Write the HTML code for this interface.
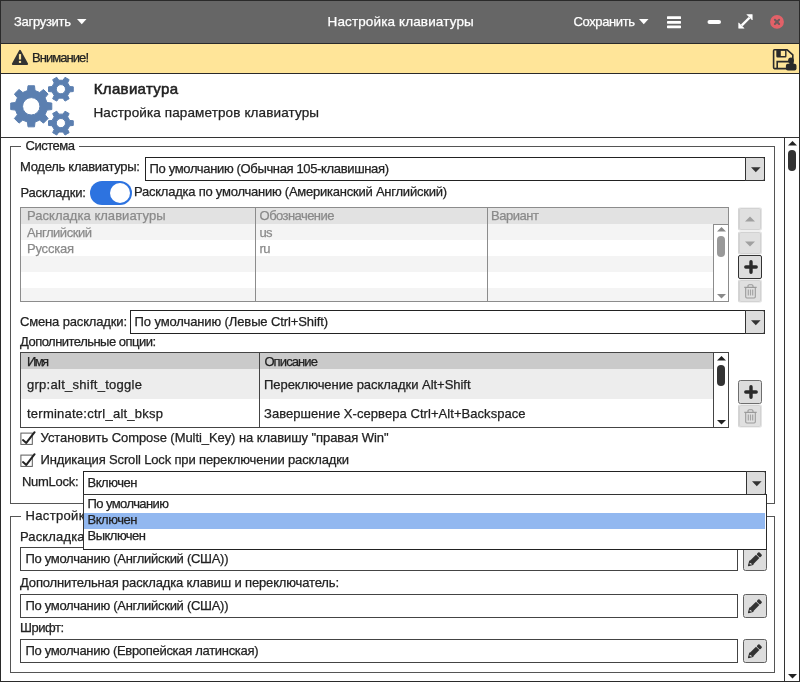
<!DOCTYPE html>
<html><head><meta charset="utf-8">
<style>
html,body{margin:0;padding:0;}
body{width:800px;height:682px;position:relative;overflow:hidden;background:#fff;font-family:"Liberation Sans",sans-serif;}
.a{position:absolute;box-sizing:border-box;}
.t{position:absolute;white-space:nowrap;line-height:20px;height:20px;-webkit-text-stroke:0.25px currentColor;}
.combo{position:absolute;box-sizing:border-box;border:1px solid #222;background:#fff;}
.cbtn{position:absolute;box-sizing:border-box;right:-1px;top:-1px;bottom:-1px;width:20px;border:1px solid #333;background:#dcdcdc;border-radius:0 2px 2px 0;}
.field{position:absolute;box-sizing:border-box;border:1px solid #444;background:#fff;}
.btn{position:absolute;box-sizing:border-box;width:24px;height:24px;border:1px solid #606060;border-radius:2.5px;background:#dddddd;}
.btn.dis{border-color:#f0f0f0 #e4e4e4 #f0f0f0 #d4d4d4;background:#e0e0e0;border-radius:3px;box-shadow:inset 0 0 0 1px #d2d2d2;}
.btn.en{border-color:#333;border-radius:2px;}
svg{position:absolute;overflow:visible;}
.tl{position:absolute;left:0;top:0;width:800px;height:682px;will-change:transform;}
</style></head><body>
<!-- title bar -->
<div class="a" style="left:0;top:0;width:800px;height:44px;background:#666;border-top:1px solid #3a3a3a;border-bottom:1px solid #2a2a2a;"></div>
<!-- warning bar -->
<div class="a" style="left:0;top:44px;width:800px;height:30px;background:#ffe599;border-bottom:1px solid #2a2a2a;"></div>
<!-- header separator -->
<div class="a" style="left:0;top:137px;width:800px;height:1px;background:#333;"></div>
<!-- scroll pane right line -->
<div class="a" style="left:784px;top:138px;width:1px;height:544px;background:#333;"></div>

<!-- fieldset 1 -->
<div class="a" style="left:10px;top:146px;width:765px;height:358px;border:1px solid #555;"></div>
<div class="a" style="left:21px;top:140px;width:58px;height:14px;background:#fff;"></div>
<!-- fieldset 2 -->
<div class="a" style="left:10px;top:516px;width:765px;height:157px;border:1px solid #555;"></div>
<div class="a" style="left:21px;top:510px;width:76px;height:14px;background:#fff;"></div>

<!-- combo 1 -->
<div class="combo" style="left:145px;top:157px;width:620px;height:24px;"><div class="cbtn"><svg style="left:5px;top:9px" width="10" height="6"><path d="M0,0.3 L9.6,0.3 L4.8,5.3Z" fill="#333"/></svg></div></div>
<!-- toggle -->
<div class="a" style="left:90px;top:181px;width:42px;height:23.7px;border-radius:12px;background:#2d73e0;"></div>
<div class="a" style="left:110px;top:182.9px;width:20.2px;height:20px;border-radius:10.1px;background:#fff;"></div>

<!-- table 1 -->
<div class="a" style="left:20px;top:207px;width:709px;height:95px;border:1px solid #8c8c8c;background:#fff;overflow:hidden;">
  <div class="a" style="left:0;top:0;width:707px;height:16px;background:#e2e2e2;"></div>
  <div class="a" style="left:0;top:16px;width:693px;height:16px;background:#f4f4f4;"></div>
  <div class="a" style="left:0;top:48px;width:693px;height:16px;background:#f4f4f4;"></div>
  <div class="a" style="left:0;top:80px;width:693px;height:16px;background:#f4f4f4;"></div>
  <div class="a" style="left:234px;top:0;width:1px;height:95px;background:#8c8c8c;"></div>
  <div class="a" style="left:466px;top:0;width:1px;height:95px;background:#8c8c8c;"></div>
  <div class="a" style="left:692px;top:16px;width:16px;height:80px;background:#fff;border-left:1px solid #8c8c8c;border-top:1px solid #8c8c8c;"></div>
  <div class="a" style="left:696.4px;top:28px;width:7.5px;height:21px;border-radius:4px;background:#999;"></div>
  <svg style="left:696px;top:19px" width="9" height="5"><path d="M0,4.5 L4.5,0 L9,4.5Z" fill="#8a8a8a"/></svg>
  <svg style="left:696px;top:86px" width="9" height="5"><path d="M0,0 L9,0 L4.5,4.5Z" fill="#8a8a8a"/></svg>
</div>
<!-- buttons next to table 1 -->
<div class="btn dis" style="left:738px;top:207px;"><svg style="left:6px;top:8px" width="10" height="6"><path d="M0,5.5 L5,0.5 L10,5.5Z" fill="#a0a0a0"/></svg></div>
<div class="btn dis" style="left:738px;top:231px;"><svg style="left:6px;top:9px" width="10" height="6"><path d="M0,0.5 L10,0.5 L5,5.5Z" fill="#a0a0a0"/></svg></div>
<div class="btn en" style="left:738px;top:255px;"><svg style="left:4.5px;top:4px" width="14" height="14" viewBox="0 0 14 14"><path d="M7,1.8 V12.2 M1.8,7 H12.2" stroke="#2a2a2a" stroke-width="3.4" stroke-linecap="round" fill="none"/></svg></div>
<div class="btn dis" style="left:738px;top:279px;"><svg style="left:4.5px;top:3.6px" width="13" height="15" viewBox="0 0 13 15"><path d="M0.3,3.4 h12.4 M4,3.2 v-1.2 q0,-1.2 1.2,-1.2 h2.6 q1.2,0 1.2,1.2 v1.2 M1.7,3.6 v9.2 q0,1.2 1.2,1.2 h7.2 q1.2,0 1.2,-1.2 v-9.2" fill="none" stroke="#9a9a9a" stroke-width="1.1"/><path d="M4.3,5.6 v6 M6.5,5.6 v6 M8.7,5.6 v6" fill="none" stroke="#a4a4a4" stroke-width="1.2"/></svg></div>

<!-- combo 2 -->
<div class="combo" style="left:130px;top:310px;width:635px;height:24px;"><div class="cbtn"><svg style="left:5px;top:9px" width="10" height="6"><path d="M0,0.3 L9.6,0.3 L4.8,5.3Z" fill="#333"/></svg></div></div>

<!-- table 2 -->
<div class="a" style="left:20px;top:352px;width:709px;height:76px;border:1px solid #444;background:#fff;overflow:hidden;">
  <div class="a" style="left:0;top:0;width:707px;height:16px;background:#cacaca;"></div>
  <div class="a" style="left:0;top:16px;width:693px;height:30px;background:#ededed;"></div>
  <div class="a" style="left:238px;top:0;width:1px;height:76px;background:#444;"></div>
  <div class="a" style="left:692px;top:0px;width:16px;height:76px;background:#fff;border-left:1px solid #444;"></div>
  <div class="a" style="left:696.4px;top:12px;width:7.6px;height:21px;border-radius:4px;background:#333;"></div>
  <svg style="left:696px;top:3px" width="9" height="5"><path d="M0,4.5 L4.5,0 L9,4.5Z" fill="#222"/></svg>
  <svg style="left:696px;top:67px" width="9" height="5"><path d="M0,0 L9,0 L4.5,4.5Z" fill="#222"/></svg>
</div>
<div class="btn" style="left:738px;top:380px;border-color:#6e6e6e;"><svg style="left:4.5px;top:4px" width="14" height="14" viewBox="0 0 14 14"><path d="M7,1.8 V12.2 M1.8,7 H12.2" stroke="#2a2a2a" stroke-width="3.4" stroke-linecap="round" fill="none"/></svg></div>
<div class="btn dis" style="left:738px;top:404px;"><svg style="left:4.5px;top:3.6px" width="13" height="15" viewBox="0 0 13 15"><path d="M0.3,3.4 h12.4 M4,3.2 v-1.2 q0,-1.2 1.2,-1.2 h2.6 q1.2,0 1.2,1.2 v1.2 M1.7,3.6 v9.2 q0,1.2 1.2,1.2 h7.2 q1.2,0 1.2,-1.2 v-9.2" fill="none" stroke="#9a9a9a" stroke-width="1.1"/><path d="M4.3,5.6 v6 M6.5,5.6 v6 M8.7,5.6 v6" fill="none" stroke="#a4a4a4" stroke-width="1.2"/></svg></div>

<!-- checkboxes -->
<svg style="left:0;top:428px" width="40" height="20"><rect x="20.9" y="5.1" width="11.4" height="11.3" fill="#fff" stroke="#5a5a5a" stroke-width="1"/><path d="M23,12.1 L26.3,14.9 L34.6,4.2" fill="none" stroke="#222" stroke-width="2" stroke-linejoin="round" stroke-linecap="round"/></svg>
<svg style="left:0;top:450px" width="40" height="20"><rect x="20.9" y="5.1" width="11.4" height="11.3" fill="#fff" stroke="#5a5a5a" stroke-width="1"/><path d="M23,12.1 L26.3,14.9 L34.6,4.2" fill="none" stroke="#222" stroke-width="2" stroke-linejoin="round" stroke-linecap="round"/></svg>

<!-- combo 3 -->
<div class="combo" style="left:83px;top:471px;width:683px;height:24px;"><div class="cbtn"><svg style="left:5px;top:9px" width="10" height="6"><path d="M0,0.3 L9.6,0.3 L4.8,5.3Z" fill="#333"/></svg></div></div>

<!-- fields -->
<div class="field" style="left:20px;top:547px;width:718px;height:24px;"></div>
<div class="btn pb" style="left:743px;top:547px;"><svg style="left:0px;top:0px" width="22" height="22" viewBox="0 0 22 22"><g transform="translate(4.5,17.6) rotate(-45)"><path d="M0,0 L4,-2.3 L4,2.3Z" fill="#cfcfcf" stroke="#333" stroke-width="1.1" stroke-linejoin="round"/><path d="M0,0 L1.6,-1 L1.6,1Z" fill="#333"/><rect x="4" y="-2.4" width="9" height="4.8" fill="#333"/><rect x="13.7" y="-2.4" width="3.4" height="4.8" rx="1" fill="#333"/></g></svg></div>
<div class="field" style="left:20px;top:594px;width:718px;height:24px;"></div>
<div class="btn pb" style="left:743px;top:594px;"><svg style="left:0px;top:0px" width="22" height="22" viewBox="0 0 22 22"><g transform="translate(4.5,17.6) rotate(-45)"><path d="M0,0 L4,-2.3 L4,2.3Z" fill="#cfcfcf" stroke="#333" stroke-width="1.1" stroke-linejoin="round"/><path d="M0,0 L1.6,-1 L1.6,1Z" fill="#333"/><rect x="4" y="-2.4" width="9" height="4.8" fill="#333"/><rect x="13.7" y="-2.4" width="3.4" height="4.8" rx="1" fill="#333"/></g></svg></div>
<div class="field" style="left:20px;top:639px;width:718px;height:24px;"></div>
<div class="btn pb" style="left:743px;top:639px;"><svg style="left:0px;top:0px" width="22" height="22" viewBox="0 0 22 22"><g transform="translate(4.5,17.6) rotate(-45)"><path d="M0,0 L4,-2.3 L4,2.3Z" fill="#cfcfcf" stroke="#333" stroke-width="1.1" stroke-linejoin="round"/><path d="M0,0 L1.6,-1 L1.6,1Z" fill="#333"/><rect x="4" y="-2.4" width="9" height="4.8" fill="#333"/><rect x="13.7" y="-2.4" width="3.4" height="4.8" rx="1" fill="#333"/></g></svg></div>

<!--GEARS_S--><svg style="left:0;top:0" width="100" height="140"><path d="M35.03,122.05 L34.50,126.84 L28.00,126.84 L27.47,122.05 L22.79,120.11 L19.02,123.13 L14.42,118.53 L17.44,114.76 L15.50,110.08 L10.71,109.55 L10.71,103.05 L15.50,102.52 L17.44,97.84 L14.42,94.07 L19.02,89.47 L22.79,92.49 L27.47,90.55 L28.00,85.76 L34.50,85.76 L35.03,90.55 L39.71,92.49 L43.48,89.47 L48.08,94.07 L45.06,97.84 L47.00,102.52 L51.79,103.05 L51.79,109.55 L47.00,110.08 L45.06,114.76 L48.08,118.53 L43.48,123.13 L39.71,120.11Z M39.95,106.30 A8.7,8.7 0 1 0 22.55,106.30 A8.7,8.7 0 1 0 39.95,106.30Z M69.71,86.54 L73.28,86.84 L73.28,91.56 L69.71,91.86 L67.61,95.50 L69.13,98.74 L65.04,101.10 L63.00,98.16 L58.80,98.16 L56.76,101.10 L52.67,98.74 L54.19,95.50 L52.09,91.86 L48.52,91.56 L48.52,86.84 L52.09,86.54 L54.19,82.90 L52.67,79.66 L56.76,77.30 L58.80,80.24 L63.00,80.24 L65.04,77.30 L69.13,79.66 L67.61,82.90Z M65.50,89.20 A4.6,4.6 0 1 0 56.30,89.20 A4.6,4.6 0 1 0 65.50,89.20Z M69.71,120.44 L73.28,120.74 L73.28,125.46 L69.71,125.76 L67.61,129.40 L69.13,132.64 L65.04,135.00 L63.00,132.06 L58.80,132.06 L56.76,135.00 L52.67,132.64 L54.19,129.40 L52.09,125.76 L48.52,125.46 L48.52,120.74 L52.09,120.44 L54.19,116.80 L52.67,113.56 L56.76,111.20 L58.80,114.14 L63.00,114.14 L65.04,111.20 L69.13,113.56 L67.61,116.80Z M65.50,123.10 A4.6,4.6 0 1 0 56.30,123.10 A4.6,4.6 0 1 0 65.50,123.10Z" fill="#5b7fb0" fill-rule="evenodd" stroke="#5b7fb0" stroke-width="1" stroke-linejoin="round"/></svg><!--GEARS_E-->
<!--ICONS_S-->
<!-- title arrows -->
<svg style="left:77px;top:19px" width="10" height="6"><path d="M0,0 L9.5,0 L4.75,5.2Z" fill="#fff"/></svg>
<svg style="left:639px;top:19px" width="10" height="6"><path d="M0,0 L9.5,0 L4.75,5.2Z" fill="#fff"/></svg>
<!-- hamburger -->
<svg style="left:660px;top:10px" width="30" height="24"><rect x="7" y="6.2" width="14" height="2.8" rx=".6" fill="#fff"/><rect x="7" y="10.9" width="14" height="2.8" rx=".6" fill="#fff"/><rect x="7" y="15.4" width="14" height="2.8" rx=".6" fill="#fff"/></svg>
<!-- minimize -->
<svg style="left:700px;top:10px" width="30" height="24"><rect x="7.5" y="9.9" width="13.5" height="4.1" rx="2" fill="#fff"/></svg>
<!-- expand -->
<svg style="left:738.4px;top:14.4px" width="15" height="15" viewBox="0 0 16 16"><path d="M4,12.2 L12.2,4" stroke="#fff" stroke-width="2.6" fill="none"/><path d="M9.4,0.6 L15.2,0.6 L15.2,6.4Z M0.7,9.4 L0.7,15.2 L6.5,15.2Z" fill="#fff" stroke="#fff" stroke-width="0.6" stroke-linejoin="round"/></svg>
<!-- close -->
<svg style="left:769px;top:14px" width="16" height="16" viewBox="0 0 16 16"><circle cx="8" cy="7.9" r="6.9" fill="#e26168"/><path d="M5.9,5.8 L10.1,10 M10.1,5.8 L5.9,10" stroke="#6b5a5c" stroke-width="2" stroke-linecap="round" fill="none"/></svg>
<!-- warning -->
<svg style="left:11px;top:49px" width="18" height="17" viewBox="0 0 18 17"><path d="M9,1.8 L16.2,15 L1.8,15Z" fill="#333" stroke="#333" stroke-width="1.8" stroke-linejoin="round"/><rect x="7.9" y="5.1" width="2.2" height="5.4" fill="#ffe599"/><rect x="7.9" y="11.9" width="2.2" height="2" fill="#ffe599"/></svg>
<!-- save -->
<svg style="left:772px;top:48px" width="26" height="24" viewBox="0 0 26 24"><path d="M2.5,1.8 H15.2 L20.8,6.8 V20.6 H2.5 Q1.6,20.6 1.6,19.6 V2.8 Q1.6,1.8 2.5,1.8Z" fill="none" stroke="#2a2a2a" stroke-width="1.6" stroke-linejoin="round"/><rect x="5" y="2" width="8.8" height="6.8" fill="none" stroke="#2a2a2a" stroke-width="1.4" rx="0.5"/><rect x="5" y="2" width="3.8" height="6.8" fill="#2a2a2a"/><path d="M5.2,20.6 V13.6 H20.8" fill="none" stroke="#2a2a2a" stroke-width="1.6"/><circle cx="19" cy="12.4" r="2.9" fill="#2a2a2a"/><rect x="13.9" y="15.8" width="10.6" height="6.8" rx="2" fill="#2a2a2a"/><path d="M17.4,15 h3.2 v2 h-3.2z" fill="#2a2a2a"/></svg>
<!--ICONS_E-->
<div class="tl"><div class="t" style="left:14.00px;top:12px;font-size:13px;color:#fff;letter-spacing:-0.295px;">Загрузить</div>
<div class="t" style="left:327.50px;top:12px;font-size:13.5px;color:#fff;letter-spacing:0.132px;">Настройка клавиатуры</div>
<div class="t" style="left:573.50px;top:12px;font-size:13px;color:#fff;letter-spacing:-0.389px;">Сохранить</div>
<div class="t" style="left:32.00px;top:48px;font-size:13px;color:#222;letter-spacing:-0.945px;">Внимание!</div>
<div class="t" style="left:93.80px;top:79px;font-size:15px;color:#222;letter-spacing:0.328px;-webkit-text-stroke:0.55px #222;">Клавиатура</div>
<div class="t" style="left:93.40px;top:103px;font-size:13.5px;color:#222;letter-spacing:0.119px;">Настройка параметров клавиатуры</div>
<div class="t" style="left:25.50px;top:136px;font-size:13px;color:#222;letter-spacing:-0.477px;">Система</div>
<div class="t" style="left:20.00px;top:157px;font-size:13px;color:#222;letter-spacing:-0.276px;">Модель клавиатуры:</div>
<div class="t" style="left:149.60px;top:159px;font-size:13px;color:#222;letter-spacing:-0.350px;">По умолчанию (Обычная 105-клавишная)</div>
<div class="t" style="left:20.40px;top:183px;font-size:13px;color:#222;letter-spacing:-0.130px;">Раскладки:</div>
<div class="t" style="left:134.00px;top:182px;font-size:13px;color:#222;letter-spacing:-0.235px;">Раскладка по умолчанию (Американский Английский)</div>
<div class="t" style="left:27.00px;top:206px;font-size:13px;color:#8a8a8a;letter-spacing:0.036px;">Раскладка клавиатуры</div>
<div class="t" style="left:259.60px;top:206px;font-size:13px;color:#8a8a8a;letter-spacing:-0.561px;">Обозначение</div>
<div class="t" style="left:491.00px;top:206px;font-size:13px;color:#8a8a8a;letter-spacing:-0.461px;">Вариант</div>
<div class="t" style="left:27.00px;top:223px;font-size:13px;color:#8a8a8a;letter-spacing:-0.460px;">Английский</div>
<div class="t" style="left:259.60px;top:223px;font-size:13px;color:#8a8a8a;letter-spacing:-0.734px;">us</div>
<div class="t" style="left:27.00px;top:239px;font-size:13px;color:#8a8a8a;letter-spacing:-0.214px;">Русская</div>
<div class="t" style="left:259.60px;top:239px;font-size:13px;color:#8a8a8a;letter-spacing:-0.562px;">ru</div>
<div class="t" style="left:20.00px;top:312px;font-size:13px;color:#222;letter-spacing:-0.156px;">Смена раскладки:</div>
<div class="t" style="left:134.60px;top:312px;font-size:13px;color:#222;letter-spacing:-0.116px;">По умолчанию (Левые Ctrl+Shift)</div>
<div class="t" style="left:20.00px;top:332px;font-size:13px;color:#222;letter-spacing:-0.519px;">Дополнительные опции:</div>
<div class="t" style="left:27.00px;top:352px;font-size:13px;color:#222;letter-spacing:-1.664px;">Имя</div>
<div class="t" style="left:264.40px;top:352px;font-size:13px;color:#222;letter-spacing:-0.890px;">Описание</div>
<div class="t" style="left:27.00px;top:375px;font-size:13px;color:#222;letter-spacing:0.271px;">grp:alt_shift_toggle</div>
<div class="t" style="left:264.00px;top:375px;font-size:13px;color:#222;letter-spacing:-0.040px;">Переключение раскладки Alt+Shift</div>
<div class="t" style="left:27.00px;top:404px;font-size:13px;color:#222;letter-spacing:0.237px;">terminate:ctrl_alt_bksp</div>
<div class="t" style="left:264.00px;top:404px;font-size:13px;color:#222;letter-spacing:0.057px;">Завершение X-сервера Ctrl+Alt+Backspace</div>
<div class="t" style="left:40.60px;top:428px;font-size:13px;color:#222;letter-spacing:-0.069px;">Установить Compose (Multi_Key) на клавишу &quot;правая Win&quot;</div>
<div class="t" style="left:40.60px;top:450px;font-size:13px;color:#222;letter-spacing:-0.148px;">Индикация Scroll Lock при переключении раскладки</div>
<div class="t" style="left:22.00px;top:472px;font-size:13px;color:#222;letter-spacing:-0.276px;">NumLock:</div>
<div class="t" style="left:87.50px;top:473px;font-size:13px;color:#222;letter-spacing:-0.458px;">Включен</div>
<div class="t" style="left:25.50px;top:506px;font-size:13px;color:#222;letter-spacing:0.344px;">Настройки</div>
<div class="t" style="left:20.00px;top:527px;font-size:13px;color:#222;letter-spacing:0.135px;">Раскладка</div>
<div class="t" style="left:25.40px;top:549px;font-size:13px;color:#222;letter-spacing:-0.282px;">По умолчанию (Английский (США))</div>
<div class="t" style="left:20.00px;top:573px;font-size:13px;color:#222;letter-spacing:-0.146px;">Дополнительная раскладка клавиш и переключатель:</div>
<div class="t" style="left:25.40px;top:596px;font-size:13px;color:#222;letter-spacing:-0.282px;">По умолчанию (Английский (США))</div>
<div class="t" style="left:20.00px;top:618px;font-size:13px;color:#222;letter-spacing:-0.478px;">Шрифт:</div>
<div class="t" style="left:25.40px;top:641px;font-size:13px;color:#222;letter-spacing:-0.305px;">По умолчанию (Европейская латинская)</div></div>

<!-- dropdown popup -->
<div class="a" style="left:83px;top:494px;width:683.8px;height:55.6px;background:#fff;border:1px solid #333;border-right:1.6px solid #2a2a2a;border-bottom:1.8px solid #222;">
  <div class="a" style="left:0;top:18px;width:681px;height:16px;background:#92b8f0;"></div>
</div>
<div class="tl"><div class="t" style="left:87.50px;top:494px;font-size:13px;color:#222;letter-spacing:-0.584px;">По умолчанию</div>
<div class="t" style="left:87.50px;top:510px;font-size:13px;color:#222;letter-spacing:-0.458px;">Включен</div>
<div class="t" style="left:87.50px;top:526px;font-size:13px;color:#222;letter-spacing:-0.513px;">Выключен</div></div>

<!-- main scrollbar -->
<div class="a" style="left:788px;top:150px;width:8px;height:21px;border-radius:4px;background:#333;"></div>
<svg style="left:788px;top:141px" width="9" height="5"><path d="M0,4.5 L4.5,0 L9,4.5Z" fill="#222"/></svg>
<svg style="left:788px;top:674px" width="9" height="5"><path d="M0,0 L9,0 L4.5,4.5Z" fill="#222"/></svg>

<!-- window border -->
<div class="a" style="left:0;top:0;width:800px;height:682px;border:1px solid #2a2a2a;pointer-events:none;"></div>
</body></html>
